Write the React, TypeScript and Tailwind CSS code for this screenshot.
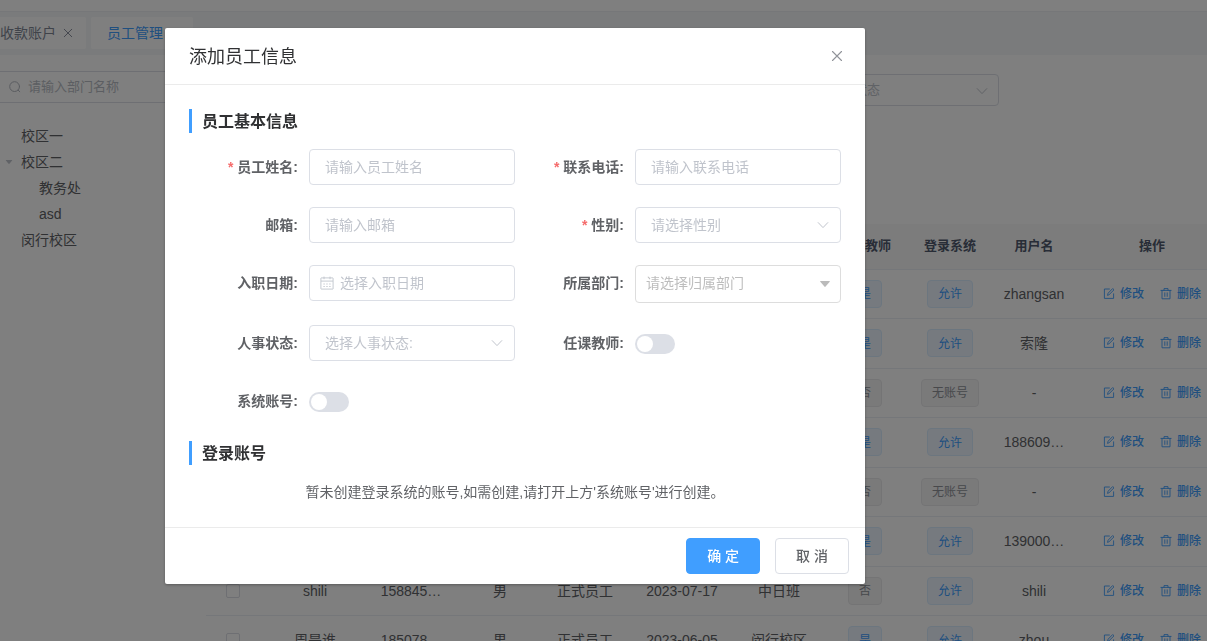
import React, { useState } from 'react';
import clsx from 'clsx';

const tree = [
  { id: 1, label: '校区一', level: 0, open: false },
  { id: 2, label: '校区二', level: 0, open: true },
  { id: 3, label: '教务处', level: 1, open: false },
  { id: 4, label: 'asd', level: 1, open: false },
  { id: 5, label: '闵行校区', level: 0, open: false },
];

type Staff = {
  id: number;
  name?: string;
  phone?: string;
  gender?: string;
  status?: string;
  date?: string;
  dept?: string;
  teacher: boolean;
  login: boolean;
  username: string;
};

const staff: Staff[] = [
  { id: 1, teacher: true, login: true, username: 'zhangsan' },
  { id: 2, teacher: true, login: true, username: '索隆' },
  { id: 3, teacher: false, login: false, username: '-' },
  { id: 4, teacher: true, login: true, username: '188609…' },
  { id: 5, teacher: false, login: false, username: '-' },
  { id: 6, teacher: true, login: true, username: '139000…' },
  {
    id: 7, name: 'shili', phone: '158845…', gender: '男', status: '正式员工', date: '2023-07-17', dept: '中日班',
    teacher: false, login: true, username: 'shili',
  },
  {
    id: 8, name: '周是谁', phone: '185078…', gender: '男', status: '正式员工', date: '2023-06-05', dept: '闵行校区',
    teacher: true, login: true, username: 'zhou',
  },
];

function CloseIcon({ className }: { className?: string }) {
  return (
    <svg viewBox="0 0 12 12" className={className} fill="none" stroke="currentColor" strokeWidth="1.1" strokeLinecap="round" aria-hidden="true">
      <path d="M1.5 1.5l9 9M10.5 1.5l-9 9" />
    </svg>
  );
}

function ChevronIcon({ className }: { className?: string }) {
  return (
    <svg viewBox="0 0 12 12" className={className} fill="none" stroke="currentColor" strokeLinecap="round" strokeLinejoin="round" aria-hidden="true">
      <path d="M1.2 3.6L6 8.6l4.8-5" />
    </svg>
  );
}

function CaretIcon({ className }: { className?: string }) {
  return (
    <svg viewBox="0 0 10 6" className={className} fill="currentColor" aria-hidden="true">
      <path d="M.6 0h8.8q.8.1.3.8L5.6 5.6q-.6.6-1.2 0L.3.8Q-.2.1.6 0z" />
    </svg>
  );
}

function SearchIcon({ className }: { className?: string }) {
  return (
    <svg viewBox="0 0 12 12" className={className} fill="none" stroke="currentColor" strokeLinecap="round" aria-hidden="true">
      <circle cx="5.6" cy="5.6" r="4.9" />
      <path d="M9.2 9.2l1.6 1.6" />
    </svg>
  );
}

function CalendarIcon({ className }: { className?: string }) {
  return (
    <svg viewBox="0 0 14 14" className={className} fill="none" stroke="currentColor" strokeWidth=".9" aria-hidden="true">
      <rect x=".9" y="1.9" width="12.2" height="11.2" rx=".3" />
      <path d="M1 5.1h12M4 .6v2.6M10 .6v2.6" />
      <path d="M3.4 8h1.4M6.3 8h1.4M9.2 8h1.4M3.4 10.5h1.4M6.3 10.5h1.4M9.2 10.5h1.4" />
    </svg>
  );
}

function EditIcon() {
  return (
    <svg viewBox="0 0 12 12" className="size-3" fill="none" stroke="currentColor" strokeWidth=".9" strokeLinecap="round" strokeLinejoin="round" aria-hidden="true">
      <path d="M6.4 1H1.4v9.4h9.2V5.8" />
      <path d="M4.6 7l.5-1.8L9.7.5 11 1.8 6.3 6.5z" />
    </svg>
  );
}

function DeleteIcon() {
  return (
    <svg viewBox="0 0 12 12" className="size-3" fill="none" stroke="currentColor" strokeWidth=".9" strokeLinecap="round" strokeLinejoin="round" aria-hidden="true">
      <path d="M.9 2.4h10.2M4 2.4V.6h4v1.8M2 2.4v8.4h8V2.4M4.8 4.8v3.6M7.2 4.8v3.6" />
    </svg>
  );
}

function Tag({ active, children }: { active: boolean; children: React.ReactNode }) {
  return (
    <span
      className={clsx(
        'inline-flex h-7 items-center rounded border px-[10px] pt-px text-xs',
        active ? 'border-[#d9ecff] bg-[#ecf5ff] text-[#409eff]' : 'border-[#e9e9eb] bg-[#f4f4f5] text-[#909399]',
      )}
    >
      {children}
    </span>
  );
}

function Field({ id, label, required, children }: { id: string; label: string; required?: boolean; children: React.ReactNode }) {
  return (
    <div className="flex items-start">
      <label htmlFor={id} className="w-[120px] shrink-0 pr-[11px] text-right font-bold leading-9">
        {required && <span className="mr-1 text-[#f56c6c]">*</span>}
        {label}:
      </label>
      <div className="min-w-0 flex-1">{children}</div>
    </div>
  );
}

const control = 'w-full appearance-none rounded border border-[#dcdfe6] bg-white outline-none';

function TextInput({ id, placeholder }: { id: string; placeholder: string }) {
  return <input id={id} type="text" placeholder={placeholder} className={clsx(control, 'h-9 px-[15px] placeholder:text-[#c0c4cc]')} />;
}

function SelectInput({ id, placeholder }: { id: string; placeholder: string }) {
  return (
    <div className="relative">
      <select id={id} defaultValue="" className={clsx(control, 'h-9 pr-8 pl-[15px] text-[#c0c4cc]')}>
        <option value="">{placeholder}</option>
      </select>
      <ChevronIcon className="pointer-events-none absolute top-3 right-3 size-3 text-[#c0c4cc]" />
    </div>
  );
}

function Switch({ id }: { id: string }) {
  const [on, setOn] = useState(false);
  return (
    <div className="flex h-9 items-center pt-px">
      <input
        id={id}
        type="checkbox"
        role="switch"
        checked={on}
        onChange={(e) => setOn(e.target.checked)}
        className="flex h-5 w-10 appearance-none items-center rounded-full bg-[#dcdfe6] px-0.5 before:size-4 before:rounded-full before:bg-white checked:justify-end checked:bg-[#409eff]"
      />
    </div>
  );
}

function SectionTitle({ children }: { children: React.ReactNode }) {
  return <h3 className="h-6 border-l-3 border-[#409eff] pt-px pl-[10px] text-base leading-6 font-bold text-[#303133]">{children}</h3>;
}

function StaffDialog() {
  return (
    <div className="fixed inset-0 overflow-hidden bg-black/50 pt-7 pl-[165px]">
      <div role="dialog" aria-labelledby="dialog-title" className="w-full max-w-[700px] rounded-xs bg-white text-[#606266] shadow-[0_1px_3px_rgba(0,0,0,0.3)]">
        <div className="flex h-[57px] items-center justify-between border-b border-[#ebebeb] px-6">
          <h2 id="dialog-title" className="pt-0.5 text-lg text-[#303133]">添加员工信息</h2>
          <button type="button" aria-label="Close" className="-mr-0.5 text-[#909399]">
            <CloseIcon className="size-3" />
          </button>
        </div>

        <form id="staff-form" className="p-6">
          <SectionTitle>员工基本信息</SectionTitle>
          <div className="mt-4 grid grid-cols-2 gap-y-[22px]">
            <Field id="name" label="员工姓名" required>
              <TextInput id="name" placeholder="请输入员工姓名" />
            </Field>
            <Field id="phone" label="联系电话" required>
              <TextInput id="phone" placeholder="请输入联系电话" />
            </Field>
            <Field id="email" label="邮箱">
              <TextInput id="email" placeholder="请输入邮箱" />
            </Field>
            <Field id="gender" label="性别" required>
              <SelectInput id="gender" placeholder="请选择性别" />
            </Field>
            <Field id="date" label="入职日期">
              <div className="relative">
                <input id="date" type="text" placeholder="选择入职日期" className={clsx(control, 'h-9 pr-3 pl-[30px] placeholder:text-[#c0c4cc]')} />
                <CalendarIcon className="pointer-events-none absolute top-[11px] left-[11px] size-[14px] text-[#c0c4cc]" />
              </div>
            </Field>
            <Field id="dept" label="所属部门">
              <div className="relative">
                <select id="dept" defaultValue="" className={clsx(control, 'h-[38px] border-[#ddd] pr-8 pb-0.5 pl-[10px] text-[#bdbdbd]')}>
                  <option value="">请选择归属部门</option>
                </select>
                <CaretIcon className="pointer-events-none absolute top-4 right-[11px] h-1.5 w-[10px] text-[#bbb]" />
              </div>
            </Field>
            <Field id="status" label="人事状态">
              <SelectInput id="status" placeholder="选择人事状态:" />
            </Field>
            <Field id="teacher" label="任课教师">
              <Switch id="teacher" />
            </Field>
            <Field id="account" label="系统账号">
              <Switch id="account" />
            </Field>
          </div>

          <div className="mt-[22px]">
            <SectionTitle>登录账号</SectionTitle>
            <p className="mt-4 text-center leading-[22px]">暂未创建登录系统的账号,如需创建,请打开上方'系统账号'进行创建。</p>
          </div>
        </form>

        <div className="flex justify-end gap-[15px] border-t border-[#ebebeb] px-4 py-[10px]">
          <button type="submit" form="staff-form" className="h-9 rounded border border-[#409eff] bg-[#409eff] px-5 font-medium text-white">
            确 定
          </button>
          <button type="button" className="h-9 rounded border border-[#dcdfe6] bg-white px-5 font-medium">
            取 消
          </button>
        </div>
      </div>
    </div>
  );
}

function Sidebar() {
  return (
    <aside className="mr-5 w-[186px] shrink-0 pt-4">
      <div className="flex h-8 items-center gap-[7px] border-y border-[#dcdfe6] pl-[9px]">
        <SearchIcon className="size-3 shrink-0 text-[#b4b8c0]" />
        <input type="text" aria-label="请输入部门名称" placeholder="请输入部门名称" className="w-full min-w-0 bg-transparent text-[13px] outline-none placeholder:text-[#b8bcc4]" />
      </div>
      <ul className="pt-5">
        {tree.map((node) => (
          <li key={node.id} className={clsx('flex h-[26px] items-center', node.level ? 'pl-[23px]' : 'pl-[5px]')}>
            <span className="w-4 shrink-0">{node.open && <CaretIcon className="h-1 w-2 text-[#c0c4cc]" />}</span>
            {node.label}
          </li>
        ))}
      </ul>
    </aside>
  );
}

function StaffTable() {
  return (
    <table className="mt-[118px] w-full min-w-[1016px] table-fixed text-center">
      <colgroup>
        <col className="w-[54px]" />
        <col className="w-[110px]" />
        <col className="w-[82px]" />
        <col className="w-[96px]" />
        <col className="w-[74px]" />
        <col className="w-[120px]" />
        <col className="w-[74px]" />
        <col className="w-[98px]" />
        <col className="w-[72px]" />
        <col className="w-[96px]" />
        <col className="w-[140px]" />
      </colgroup>
      <thead>
        <tr className="h-[45px] border-b border-[#ebeef5] bg-[#f8f8f9] text-[13px] text-[#515a6e]">
          <th colSpan={7} />
          <th>任课教师</th>
          <th>登录系统</th>
          <th>用户名</th>
          <th>操作</th>
        </tr>
      </thead>
      <tbody>
        {staff.map((row) => (
          <tr key={row.id} className="h-[49px] border-b border-[#ebeef5] even:h-[50px]">
            <td>
              <input type="checkbox" aria-label={row.username} className="mx-auto block size-[14px] appearance-none rounded-xs border border-[#dcdfe6] bg-white" />
            </td>
            <td>{row.name}</td>
            <td>{row.phone}</td>
            <td>{row.gender}</td>
            <td>{row.status}</td>
            <td>{row.date}</td>
            <td>{row.dept}</td>
            <td>
              <Tag active={row.teacher}>{row.teacher ? '是' : '否'}</Tag>
            </td>
            <td>
              <Tag active={row.login}>{row.login ? '允许' : '无账号'}</Tag>
            </td>
            <td>{row.username}</td>
            <td>
              <div className="flex justify-center gap-4 text-xs font-medium text-[#409eff]">
                <button type="button" className="flex items-center gap-[5px]">
                  <EditIcon />
                  修改
                </button>
                <button type="button" className="flex items-center gap-[5px]">
                  <DeleteIcon />
                  删除
                </button>
              </div>
            </td>
          </tr>
        ))}
      </tbody>
    </table>
  );
}

export default function App() {
  return (
    <div className="h-screen overflow-hidden bg-white font-['Liberation_Sans','Noto_Sans_CJK_SC',sans-serif] text-sm text-[#606266]">
      <header className="h-3 border-b border-[#eceef2]" />
      <nav className="flex h-[43px] gap-[5px] bg-[#f5f7f9] pt-[5px] text-[#808695]">
        <button type="button" className="flex h-8 items-center gap-[7px] rounded-r-xs bg-white pr-[13px]">
          收款账户
          <CloseIcon className="size-[10px]" />
        </button>
        <button type="button" className="flex h-8 items-center gap-[7px] rounded-xs bg-white pr-[13px] pl-4 text-[#409eff]">
          员工管理
          <CloseIcon className="size-[10px]" />
        </button>
      </nav>

      <div className="flex">
        <Sidebar />
        <main className="min-w-0 flex-1 overflow-hidden pt-[19px]">
          <div className="pl-[568px]">
            <div className="relative w-[225px]">
              <select aria-label="人事状态" defaultValue="" className="h-8 w-full appearance-none rounded border border-[#dcdfe6] bg-white pr-8 pl-[14px] text-[13px] text-[#c0c4cc]">
                <option value="">请选择人事状态</option>
              </select>
              <ChevronIcon className="pointer-events-none absolute top-[11px] right-[11px] size-3 text-[#c0c4cc]" />
            </div>
          </div>
          <StaffTable />
        </main>
      </div>

      <StaffDialog />
    </div>
  );
}
